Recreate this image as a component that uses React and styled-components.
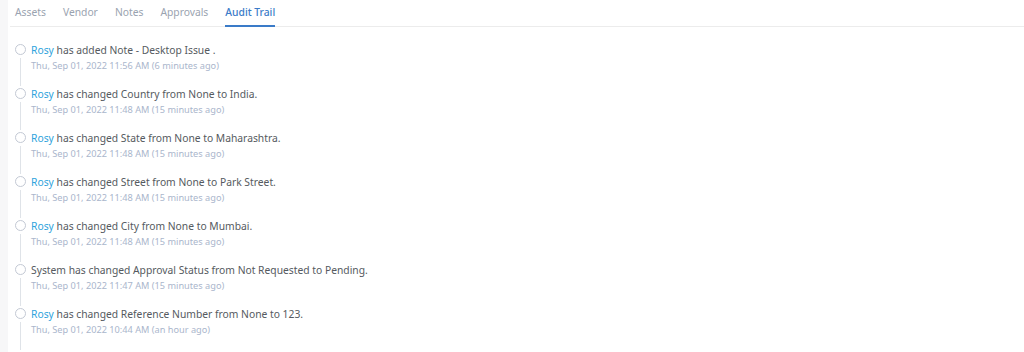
import React from "react";
import styled, { createGlobalStyle } from "styled-components";

const GlobalStyle = createGlobalStyle`
  body {
    margin: 0;
    background: #fff;
    font-family: "Noto Sans", "Open Sans", sans-serif;
  }
`;

const tabs = ["Assets", "Vendor", "Notes", "Approvals", "Audit Trail"];

const entries = [
  { user: "Rosy", text: "has added Note - Desktop Issue .", time: "Thu, Sep 01, 2022 11:56 AM (6 minutes ago)" },
  { user: "Rosy", text: "has changed Country from None to India.", time: "Thu, Sep 01, 2022 11:48 AM (15 minutes ago)" },
  { user: "Rosy", text: "has changed State from None to Maharashtra.", time: "Thu, Sep 01, 2022 11:48 AM (15 minutes ago)" },
  { user: "Rosy", text: "has changed Street from None to Park Street.", time: "Thu, Sep 01, 2022 11:48 AM (15 minutes ago)" },
  { user: "Rosy", text: "has changed City from None to Mumbai.", time: "Thu, Sep 01, 2022 11:48 AM (15 minutes ago)" },
  { user: "System", text: "has changed Approval Status from Not Requested to Pending.", time: "Thu, Sep 01, 2022 11:47 AM (15 minutes ago)", system: true },
  { user: "Rosy", text: "has changed Reference Number from None to 123.", time: "Thu, Sep 01, 2022 10:44 AM (an hour ago)" },
];

const App = () => {
  return (
    <>
      <GlobalStyle />
      <Page>
        <Side />
        <Content>
          <TabBar>
            {tabs.map((t) => (
              <Tab key={t} $active={t === "Audit Trail"}>
                {t}
              </Tab>
            ))}
          </TabBar>
          <Timeline>
            {entries.map((e, i) => (
              <Entry key={i}>
                <Marker>
                  <Dot />
                  <Line />
                </Marker>
                <Body>
                  <Message>
                    <User $system={e.system}>{e.user}</User> {e.text}
                  </Message>
                  <Stamp>{e.time}</Stamp>
                </Body>
              </Entry>
            ))}
          </Timeline>
        </Content>
      </Page>
    </>
  );
};

export default App;

const Page = styled.div`
  display: flex;
  width: 1024px;
  height: 352px;
  overflow: hidden;
`;

const Side = styled.div`
  width: 8px;
  flex-shrink: 0;
  background: #f7f7f8;
`;

const Content = styled.div`
  flex: 1;
  padding-left: 2px;
`;

const TabBar = styled.div`
  display: flex;
  gap: 17px;
  padding: 0 5px;
  height: 26px;
  border-bottom: 1px solid #ececec;
`;

const Tab = styled.div`
  font-size: 10.3px;
  line-height: 24px;
  color: ${(p) => (p.$active ? "#3a7bc8" : "#9aa3b0")};
  font-weight: ${(p) => (p.$active ? 500 : 400)};
  border-bottom: 2px solid ${(p) => (p.$active ? "#3a7bc8" : "transparent")};
  margin-bottom: -1px;
`;

const Timeline = styled.div`
  display: flex;
  flex-direction: column;
  padding-top: 16px;
`;

const Entry = styled.div`
  display: flex;
  height: 44px;
`;

const Marker = styled.div`
  width: 21px;
  display: flex;
  flex-direction: column;
  align-items: center;
`;

const Dot = styled.div`
  width: 9px;
  height: 9px;
  border: 1px solid #c3c9d4;
  border-radius: 50%;
  margin-top: 1px;
  flex-shrink: 0;
`;

const Line = styled.div`
  width: 1px;
  height: 28px;
  background: #dfe3e8;
  margin-top: 3px;
`;

const Body = styled.div`
  display: flex;
  flex-direction: column;
`;

const Message = styled.div`
  font-size: 10.3px;
  line-height: 14px;
  color: #555a60;
`;

const User = styled.span`
  color: ${(p) => (p.$system ? "#555a60" : "#2ea3dc")};
`;

const Stamp = styled.div`
  font-size: 9.2px;
  line-height: 14px;
  margin-top: 2px;
  color: #aab6cc;
`;
